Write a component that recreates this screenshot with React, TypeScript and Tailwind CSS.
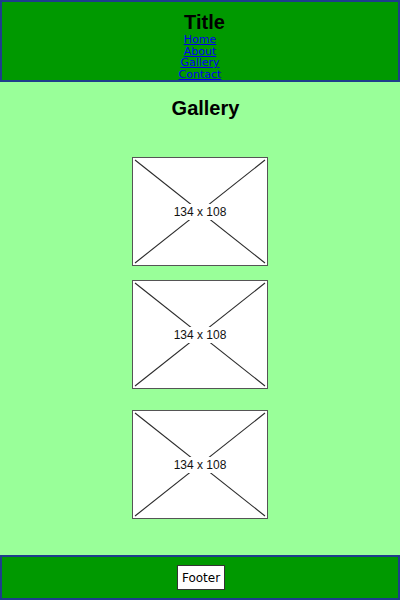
const navLinks = ["Home", "About", "Gallery", "Contact"];

function Placeholder({ className = "" }: { className?: string }) {
  return (
    <div className={`relative h-[109px] w-[136px] border-[1.5px] border-[#555] bg-white ${className}`}>
      <svg className="absolute inset-0 h-full w-full" viewBox="0 0 133 106" preserveAspectRatio="none">
        <line x1="2" y1="2" x2="131" y2="104" stroke="#2a2a2a" strokeWidth="1.1" />
        <line x1="131" y1="2" x2="2" y2="104" stroke="#2a2a2a" strokeWidth="1.1" />
      </svg>
      <div className="absolute inset-0 flex items-center justify-center">
        <span className="bg-white px-[3px] text-[12px] leading-[16px] text-[#111] [font-family:'Liberation_Sans',sans-serif]">
          134 x 108
        </span>
      </div>
    </div>
  );
}

export default function App() {
  return (
    <div className="flex h-[600px] w-[400px] flex-col bg-[#99ff99] [font-family:'Liberation_Sans',Arial,sans-serif]">
      <header className="flex h-[82px] flex-col items-center border-2 border-[#1e3d8c] bg-[#009900] pt-[9px]">
        <h1 className="pl-[9px] text-[20px] font-bold leading-[23px] text-black">Title</h1>
        <nav className="flex flex-col items-center">
          {navLinks.map((link) => (
            <a
              key={link}
              href="#"
              className="block text-[11px] leading-[11.5px] text-[#0000ee] underline [font-family:'DejaVu_Sans',sans-serif]"
            >
              {link}
            </a>
          ))}
        </nav>
      </header>

      <main className="flex flex-1 flex-col items-center pt-[12px]">
        <h2 className="pl-[11px] text-[20px] font-bold leading-[28px] text-black">Gallery</h2>
        <Placeholder className="mt-[35px]" />
        <Placeholder className="mt-[14px]" />
        <Placeholder className="mt-[21px]" />
      </main>

      <footer className="flex h-[45px] items-center justify-center border-2 border-[#1e3d8c] bg-[#009900]">
        <div className="ml-[2px] flex h-[25px] w-[48px] items-center justify-center border border-[#333] bg-white text-[12px] text-black [font-family:'DejaVu_Sans',sans-serif]">
          Footer
        </div>
      </footer>
    </div>
  );
}
